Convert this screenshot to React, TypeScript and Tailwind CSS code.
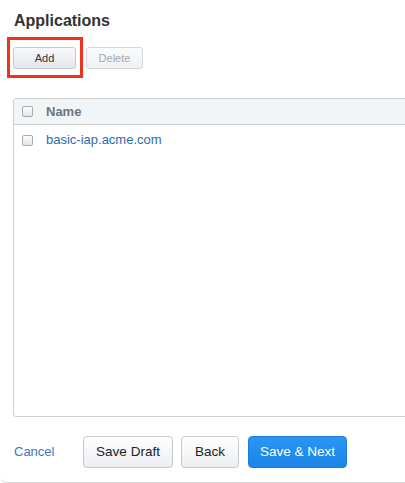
import React from "react";

function Box() {
  return (
    <span className="inline-block w-[11px] h-[11px] rounded-[2px] border border-[#a9a9a9] bg-gradient-to-b from-[#fdfdfd] to-[#e6e6e6]" />
  );
}

export default function App() {
  return (
    <div
      className="w-[405px] h-[483px] bg-white overflow-hidden relative text-[#333]"
      style={{ fontFamily: '"Liberation Sans", Arial, sans-serif' }}
    >
      <div className="border-b border-[#d6d6d6] rounded-bl-[6px] h-[483px] flex flex-col">
        <h1 className="pl-[14px] pt-[11px] text-[16px] leading-[20px] font-bold text-[#333]">Applications</h1>
        <div className="relative flex gap-[10px] pl-[13px] mt-[16px]">
          <div className="absolute left-[7px] top-[-10px] w-[76px] h-[41px] border-[3px] border-[#f0321e]" />
          <button className="w-[63px] h-[22px] rounded-[3px] border border-[#c5c8cf] bg-gradient-to-b from-[#f8f9fb] to-[#e4e6ea] text-[11px] text-[#333]">
            Add
          </button>
          <button className="w-[57px] h-[22px] rounded-[3px] border border-[#d4d6db] bg-gradient-to-b from-[#fafbfc] to-[#f0f1f3] text-[11px] text-[#a5a8ad]">
            Delete
          </button>
        </div>
        <div className="ml-[13px] mt-[29px] w-[420px] h-[319px] border border-[#cfcfcf] rounded-l-[3px] flex flex-col">
          <div className="h-[26px] bg-[#f2f5f8] border-b border-[#cfcfcf] flex items-center pl-[8px]">
            <Box />
            <span className="ml-[13px] text-[13px] font-bold text-[#6d7482]">Name</span>
          </div>
          <div className="h-[30px] flex items-center pl-[8px]">
            <Box />
            <span className="ml-[13px] text-[13px] text-[#2b6cb0]">basic-iap.acme.com</span>
          </div>
        </div>
        <div className="flex items-center mt-[19px] pl-[14px]">
          <span className="text-[13px] text-[#3a78bf] w-[69px]">Cancel</span>
          <button className="w-[90px] h-[32px] rounded-[4px] border border-[#c5c8cf] bg-gradient-to-b from-[#ffffff] to-[#eceef2] text-[13.5px] text-[#222]">
            Save Draft
          </button>
          <button className="ml-[8px] w-[58px] h-[32px] rounded-[4px] border border-[#c5c8cf] bg-gradient-to-b from-[#ffffff] to-[#eceef2] text-[13.5px] text-[#222]">
            Back
          </button>
          <button className="ml-[9px] w-[99px] h-[32px] rounded-[4px] border border-[#1a7fdc] bg-gradient-to-b from-[#2a96f3] to-[#1a84e8] text-[13.5px] text-white">
            Save &amp; Next
          </button>
        </div>
      </div>
    </div>
  );
}
